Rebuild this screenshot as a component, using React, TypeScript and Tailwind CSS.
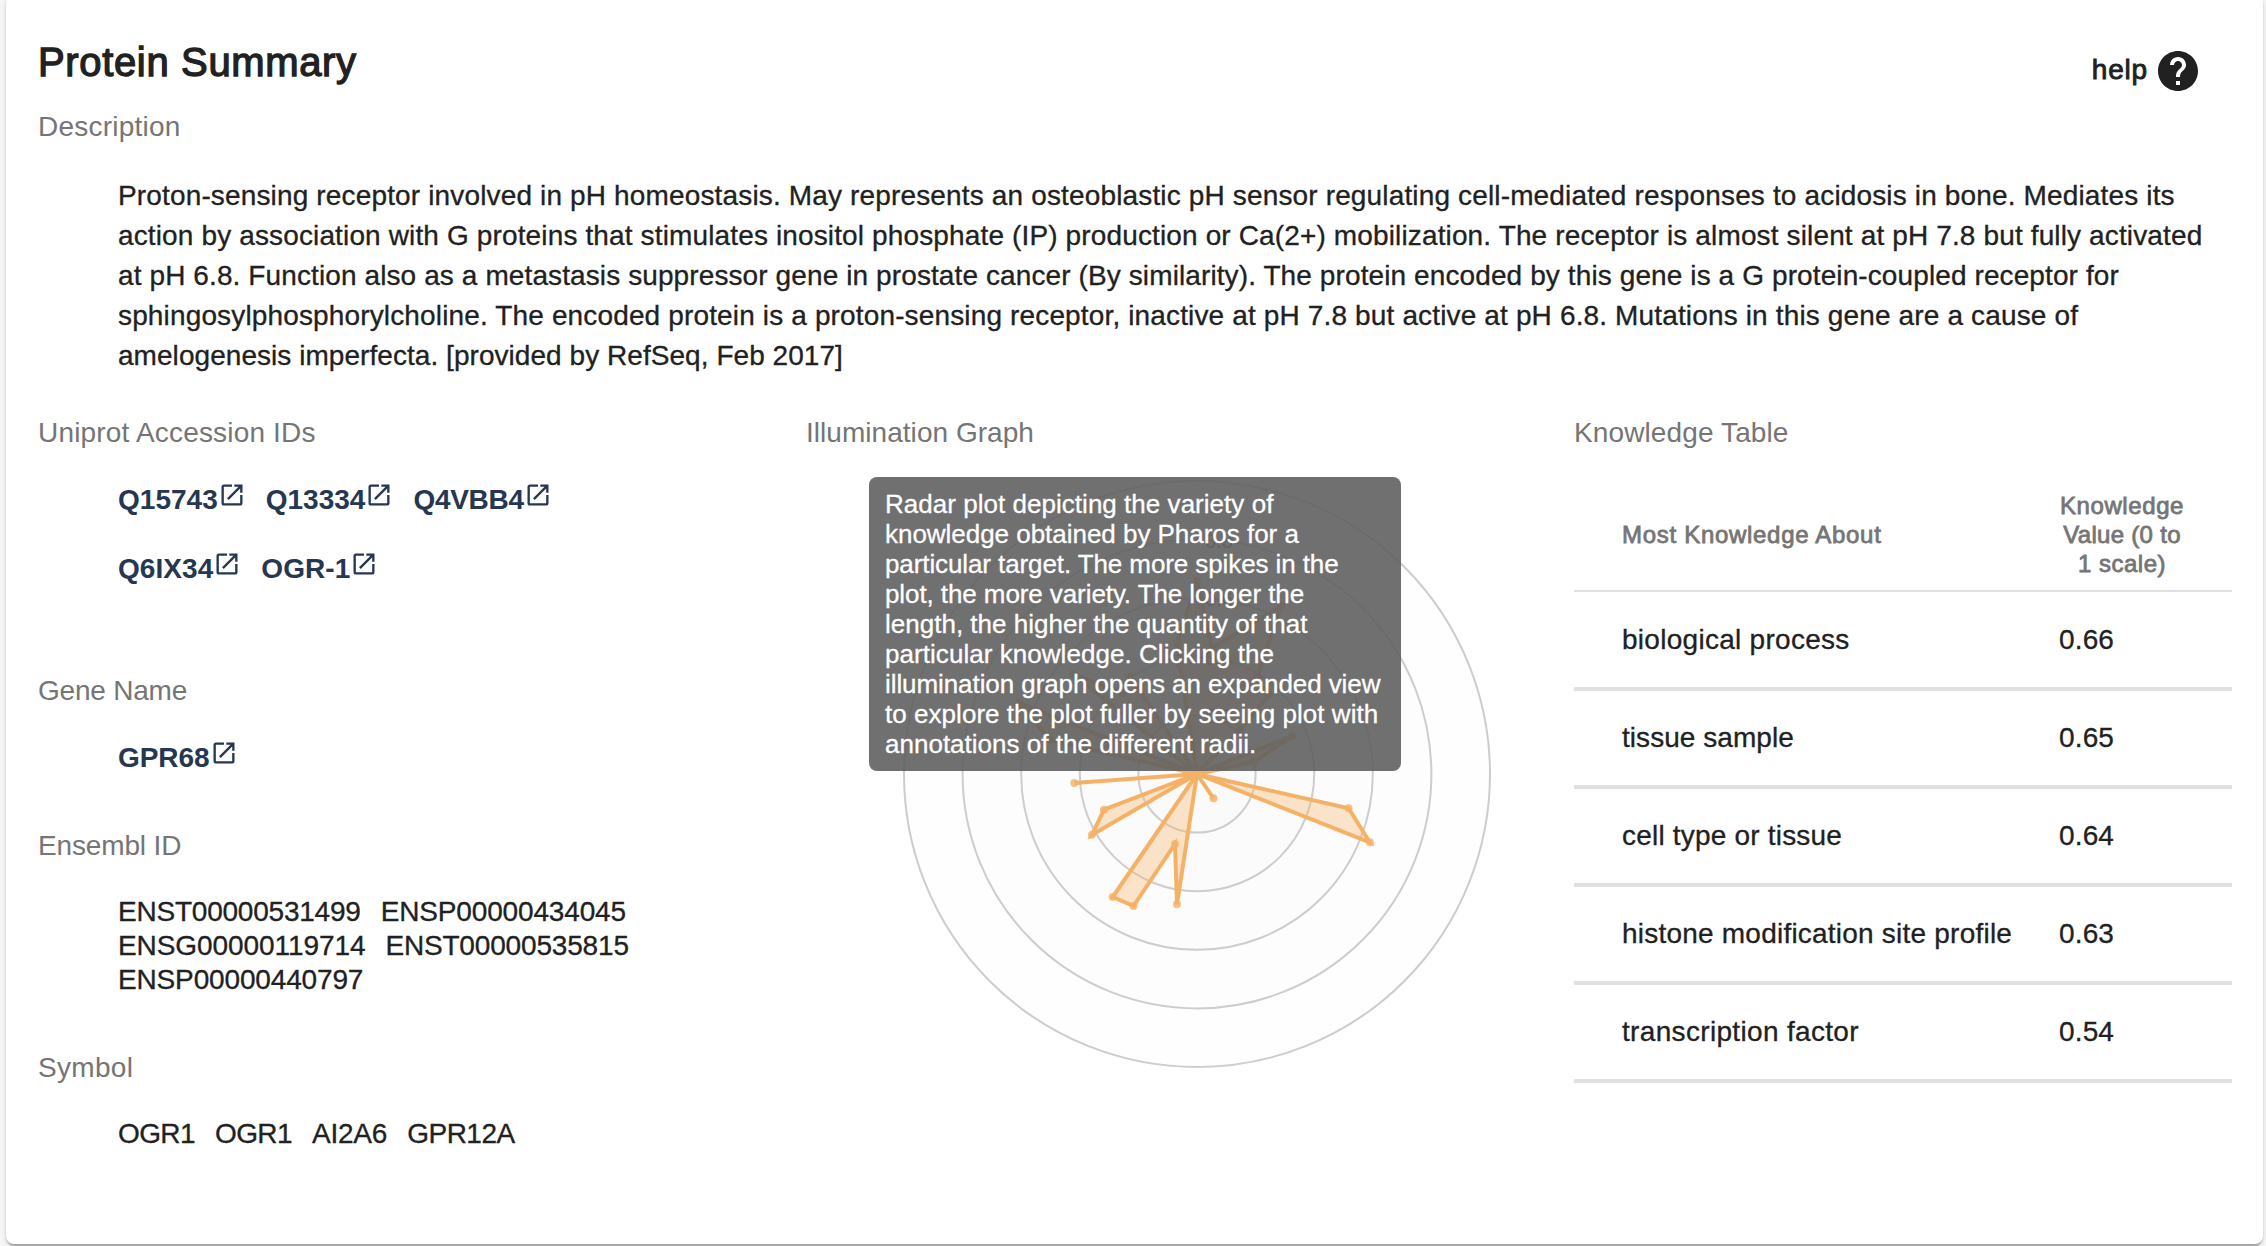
import type { ReactNode } from 'react';

const LABEL = 'block h-10 whitespace-nowrap text-[28px] leading-10 text-[#757575]';

const description = [
  { text: 'Proton-sensing receptor involved in pH homeostasis. May represents an osteoblastic pH sensor regulating cell-mediated responses to acidosis in bone. Mediates its', track: 'tracking-[0.15px]' },
  { text: 'action by association with G proteins that stimulates inositol phosphate (IP) production or Ca(2+) mobilization. The receptor is almost silent at pH 7.8 but fully activated', track: 'tracking-[0.137px]' },
  { text: 'at pH 6.8. Function also as a metastasis suppressor gene in prostate cancer (By similarity). The protein encoded by this gene is a G protein-coupled receptor for', track: 'tracking-[0.106px]' },
  { text: 'sphingosylphosphorylcholine. The encoded protein is a proton-sensing receptor, inactive at pH 7.8 but active at pH 6.8. Mutations in this gene are a cause of', track: 'tracking-[0.145px]' },
  { text: 'amelogenesis imperfecta. [provided by RefSeq, Feb 2017]', track: 'tracking-[0.05px]' },
];

const tooltip = [
  { text: 'Radar plot depicting the variety of', track: 'tracking-[0.03px]' },
  { text: 'knowledge obtained by Pharos for a', track: 'tracking-[-0.03px]' },
  { text: 'particular target. The more spikes in the', track: 'tracking-[-0.1px]' },
  { text: 'plot, the more variety. The longer the', track: 'tracking-[-0.09px]' },
  { text: 'length, the higher the quantity of that', track: 'tracking-[0.01px]' },
  { text: 'particular knowledge. Clicking the', track: 'tracking-[0.05px]' },
  { text: 'illumination graph opens an expanded view', track: 'tracking-[-0.08px]' },
  { text: 'to explore the plot fuller by seeing plot with', track: 'tracking-[0.04px]' },
  { text: 'annotations of the different radii.', track: 'tracking-[0.01px]' },
];

const knowledge = [
  { name: 'biological process', value: '0.66', track: 'tracking-[0.28px]' },
  { name: 'tissue sample', value: '0.65', track: 'tracking-[0.05px]' },
  { name: 'cell type or tissue', value: '0.64', track: 'tracking-[0.2px]' },
  { name: 'histone modification site profile', value: '0.63', track: 'tracking-[0.22px]' },
  { name: 'transcription factor', value: '0.54', track: 'tracking-[0.33px]' },
];

// Radar vertices, relative to the centre of the plot.
const spikes: [number, number][] = [
  [0, -193], [15, -126], [84, -168], [60, -96], [72, -79], [43, -44], [0, 0],
  [95, -38], [57, -12], [0, 0],
  [151.6, 34.3], [172.8, 68.3], [0, 0], [16.5, 24.3], [0, 0],
  [-20, 130.3], [-22, 70], [-63.5, 132], [-84.3, 123], [0, 0],
  [-105, 60.7], [-93, 35.7], [0, 0], [-122.7, 9], [0, 0],
  [-147, -34], [-178, -71], [0, 0], [-124, -100], [-74, -81], [-67, -97], [0, 0],
  [-17, -109], [-20, -131],
];

function OpenIcon() {
  return (
    <svg viewBox="0 0 24 24" className="mt-px size-7 shrink-0" fill="currentColor" aria-hidden="true">
      <path d="M19 19H5V5h7V3H5c-1.11 0-2 .9-2 2v14c0 1.1.89 2 2 2h14c1.1 0 2-.9 2-2v-7h-2v7zM14 3v2h3.59l-9.83 9.83 1.41 1.41L19 6.41V10h2V3h-7z" />
    </svg>
  );
}

function ExternalLink({ children, track }: { children: ReactNode; track: string }) {
  return (
    <a className="flex h-10 items-start text-[28px] font-bold leading-10 text-[#263751]">
      <span className={track}>{children}</span>
      <OpenIcon />
    </a>
  );
}

function Radar() {
  return (
    <svg viewBox="-300 -300 600 600" className="ml-[91px] mt-[21px] block size-[600px]">
      {[5, 4, 3, 2, 1].map((n) => (
        <circle key={n} r={n * 58.6} fill="#cdcdcd" fillOpacity="0.016" stroke="#cdcdcd" strokeWidth="2" />
      ))}
      {[0.8, 0.6, 0.4, 0.2].map((v) => (
        <text key={v} x="8" y={-293 * v + 8} fontSize="20" fill="#737373">{v}</text>
      ))}
      <polygon
        points={spikes.map((p) => p.join(',')).join(' ')}
        fill="#f5b56a"
        fillOpacity="0.35"
        stroke="#f5b266"
        strokeWidth="4"
        strokeLinejoin="miter"
        strokeMiterlimit="4"
      />
      {spikes.map(([x, y], i) => (
        <circle key={i} cx={x} cy={y} r="4" fill="#f5b266" fillOpacity="0.8" />
      ))}
    </svg>
  );
}

export default function App() {
  return (
    <div className="h-[1246px] overflow-hidden bg-[#f7f7f7] font-['Liberation_Sans',Arial,sans-serif] text-[28px] text-[#212121]">
      <main className="-mt-1 ml-[6px] flex h-[1248px] w-[2257px] flex-col rounded-lg bg-white pl-8 pr-[31px] pt-[42px] shadow-[0_4px_2px_-2px_rgba(0,0,0,0.2),0_2px_2px_rgba(0,0,0,0.14),0_2px_6px_rgba(0,0,0,0.12)]">
        <header className="flex h-[69px] items-start justify-between">
          <h1 className="text-[40px] leading-[48px] tracking-[0.65px] [-webkit-text-stroke:1.3px_#212121]">Protein Summary</h1>
          <div className="flex items-center gap-[6px] pr-[30px] pt-[9px]">
            <span className="-mt-[2px] leading-10 tracking-[0.8px] [-webkit-text-stroke:0.9px_#212121]">help</span>
            <svg viewBox="0 0 24 24" className="size-12" fill="currentColor" aria-hidden="true">
              <path d="M12 2C6.48 2 2 6.48 2 12s4.48 10 10 10 10-4.48 10-10S17.52 2 12 2zm1 17h-2v-2h2v2zm2.07-7.75l-.9.92C13.45 12.9 13 13.5 13 15h-2v-.5c0-1.1.45-2.1 1.17-2.83l1.24-1.26c.37-.36.59-.86.59-1.41 0-1.1-.9-2-2-2s-2 .9-2 2H8c0-2.21 1.79-4 4-4s4 1.79 4 4c0 .88-.36 1.68-.93 2.25z" />
            </svg>
          </div>
        </header>

        <section>
          <h2 className={LABEL}><span className="tracking-[0.22px]">Description</span></h2>
          <p className="pl-20 pt-[29px] leading-10 [-webkit-text-stroke:0.3px_#212121]">
            {description.map((line) => (
              <span key={line.text} className={`block whitespace-nowrap ${line.track}`}>{line.text}</span>
            ))}
          </p>
        </section>

        <div className="mt-[37px] grid grid-cols-[658px_658px_658px] gap-x-[110px]">
          <div>
            <h2 className={LABEL}><span className="tracking-[0.178px]">Uniprot Accession IDs</span></h2>
            <div className="mt-[27px] flex flex-col gap-[29px] pl-20">
              <div className="flex gap-5">
                <ExternalLink track="tracking-[0.02px]">Q15743</ExternalLink>
                <ExternalLink track="tracking-[0px]">Q13334</ExternalLink>
                <ExternalLink track="tracking-[-0.3px]">Q4VBB4</ExternalLink>
              </div>
              <div className="flex gap-5">
                <ExternalLink track="tracking-[0.05px]">Q6IX34</ExternalLink>
                <ExternalLink track="tracking-[0.1px]">OGR-1</ExternalLink>
              </div>
            </div>

            <h2 className={`${LABEL} mt-[82px]`}><span className="tracking-[-0.22px]">Gene Name</span></h2>
            <div className="mt-[27px] flex pl-20">
              <ExternalLink track="tracking-[-0.06px]">GPR68</ExternalLink>
            </div>

            <h2 className={`${LABEL} mt-12`}><span className="tracking-[-0.15px]">Ensembl ID</span></h2>
            <div className="mt-[29px] flex flex-col pl-20 leading-[34px] [-webkit-text-stroke:0.3px_#212121]">
              <div className="flex gap-5">
                <span className="tracking-[-0.22px]">ENST00000531499</span>
                <span className="tracking-[-0.15px]">ENSP00000434045</span>
              </div>
              <div className="flex gap-5">
                <span className="tracking-[-0.08px]">ENSG00000119714</span>
                <span className="tracking-[-0.17px]">ENST00000535815</span>
              </div>
              <span className="tracking-[-0.15px]">ENSP00000440797</span>
            </div>

            <h2 className={`${LABEL} mt-[51px]`}><span className="tracking-[0.3px]">Symbol</span></h2>
            <div className="mt-[29px] flex gap-5 pl-20 leading-[34px] [-webkit-text-stroke:0.3px_#212121]">
              <span className="tracking-[-0.6px]">OGR1</span>
              <span className="tracking-[-0.6px]">OGR1</span>
              <span className="tracking-[-0.2px]">AI2A6</span>
              <span className="tracking-[-0.5px]">GPR12A</span>
            </div>
          </div>

          <div className="relative">
            <h2 className={LABEL}><span className="tracking-[0.04px]">Illumination Graph</span></h2>
            <Radar />
            <div className="absolute left-[63px] top-[64px] h-[294px] w-[532px] rounded-lg bg-[rgba(97,97,97,0.9)] pl-4 pt-3 text-[26px] leading-[30px] text-white [-webkit-text-stroke:0.3px_#ffffff]">
              {tooltip.map((line) => (
                <span key={line.text} className={`block whitespace-nowrap ${line.track}`}>{line.text}</span>
              ))}
            </div>
          </div>

          <div>
            <h2 className={LABEL}><span className="tracking-[0.12px]">Knowledge Table</span></h2>
            <table className="mt-[26px] w-[658px] table-fixed border-collapse">
              <colgroup>
                <col className="w-[484px]" />
                <col />
              </colgroup>
              <thead>
                <tr className="h-[112px] border-b-2 border-[#e0e0e0] text-2xl leading-[29px] text-[#757575] [-webkit-text-stroke:0.8px_#757575]">
                  <th className="pl-12 text-left font-normal tracking-[0.7px]">Most Knowledge About</th>
                  <th className="font-normal">
                    <div className="w-[128px] text-center">
                      <span className="block whitespace-nowrap tracking-[0.6px]">Knowledge</span>
                      <span className="block whitespace-nowrap tracking-[0.3px]">Value (0 to</span>
                      <span className="block whitespace-nowrap tracking-[0.5px]">1 scale)</span>
                    </div>
                  </th>
                </tr>
              </thead>
              <tbody className="[-webkit-text-stroke:0.3px_#212121]">
                {knowledge.map((row) => (
                  <tr key={row.name} className="h-[98px] border-b-4 border-[#e0e0e0] leading-10">
                    <td className={`whitespace-nowrap pl-12 ${row.track}`}>{row.name}</td>
                    <td className="pl-px tracking-[0.15px]">{row.value}</td>
                  </tr>
                ))}
              </tbody>
            </table>
          </div>
        </div>
      </main>
    </div>
  );
}
